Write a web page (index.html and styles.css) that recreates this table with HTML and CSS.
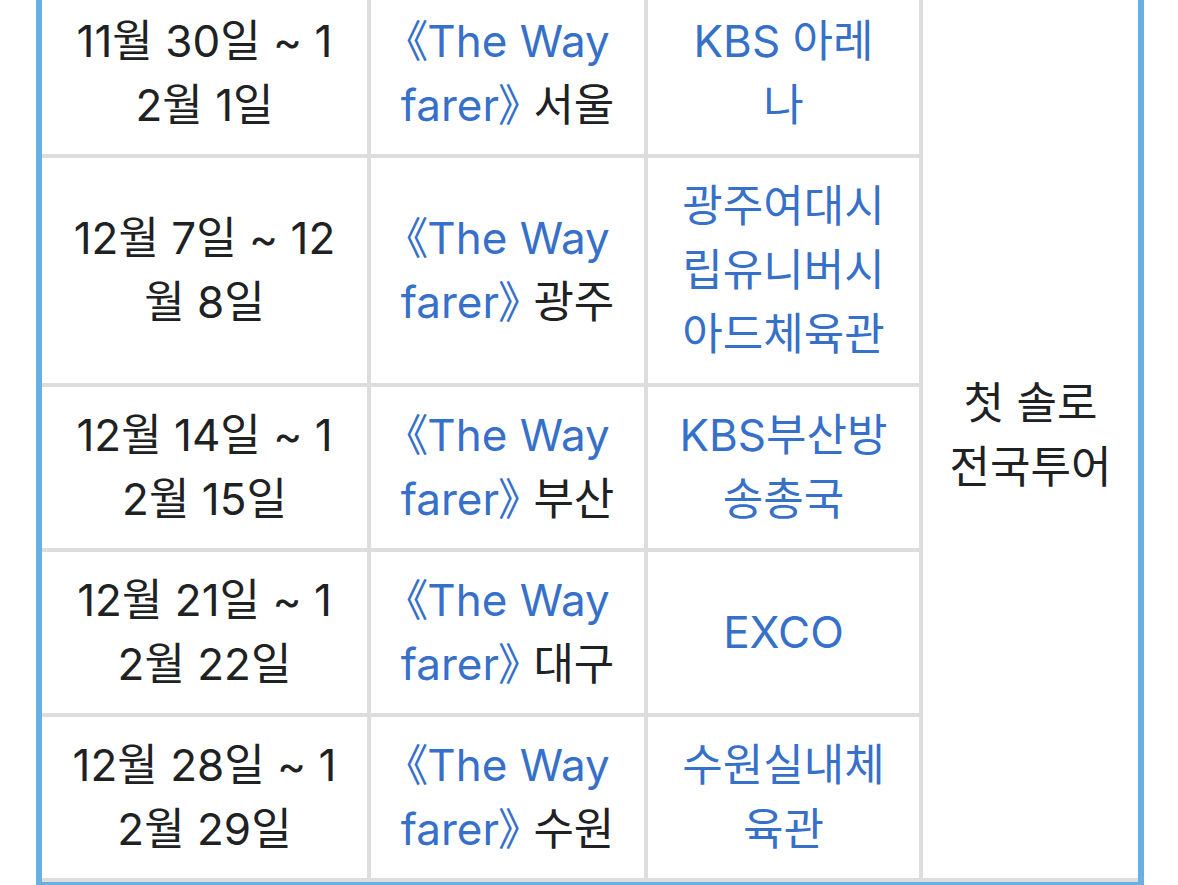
FILE: index.html
```html
<!DOCTYPE html>
<html>
    <head>
        <meta charset="utf-8">
        <link rel="stylesheet" href="styles.css">
    </head>
 <body>
    <div class="page">
        <table class="tour">
            <tr>
                <td class="date">11월 30일 ~ 1<br>2월 1일</td>
                <td class="show"><a href="#">《The Way<br>farer》</a> 서울</td>
                <td class="venue"><a href="#">KBS 아레<br>나</a></td>
                <td class="note" rowspan="5">첫 솔로<br>전국투어</td>
            </tr>
            <tr>
                <td class="date">12월 7일 ~ 12<br>월 8일</td>
                <td class="show"><a href="#">《The Way<br>farer》</a> 광주</td>
                <td class="venue"><a href="#">광주여대시<br>립유니버시<br>아드체육관</a></td>
            </tr>
            <tr>
                <td class="date">12월 14일 ~ 1<br>2월 15일</td>
                <td class="show"><a href="#">《The Way<br>farer》</a> 부산</td>
                <td class="venue"><a href="#">KBS부산방<br>송총국</a></td>
            </tr>
            <tr>
                <td class="date">12월 21일 ~ 1<br>2월 22일</td>
                <td class="show"><a href="#">《The Way<br>farer》</a> 대구</td>
                <td class="venue"><a href="#">EXCO</a></td>
            </tr>
            <tr>
                <td class="date">12월 28일 ~ 1<br>2월 29일</td>
                <td class="show"><a href="#">《The Way<br>farer》</a> 수원</td>
                <td class="venue"><a href="#">수원실내체<br>육관</a></td>
            </tr>
        </table>
    </div>
 </body>
</html>
```

FILE: styles.css
```css
body{
    margin: 0;
    background-color: #ffffff;
    font-family: Inter, "Noto Sans CJK KR", sans-serif;
    font-feature-settings: "palt";
    color: #202122;
}
.page{
    padding-left: 36px;
    height: 885px;
    overflow: hidden;
}
.tour{
    box-sizing: border-box;
    width: 1108px;
    margin-top: -13px;
    table-layout: fixed;
    border-collapse: separate;
    border-spacing: 0;
    border: 6px solid #68b0df;
}
.tour td{
    box-sizing: border-box;
    padding: 16px 8px 17px;
    font-size: 44px;
    line-height: 64px;
    text-align: center;
    vertical-align: middle;
    white-space: nowrap;
    border-right: 4px solid #dddddd;
    border-bottom: 4px solid #dddddd;
}
.tour a{
    color: #3670c9;
    text-decoration: none;
}
.date{
    width: 329px;
}
.show{
    width: 277px;
}
.venue{
    width: 275px;
}
.tour .note{
    width: 215px;
    border-right: none;
}
```
